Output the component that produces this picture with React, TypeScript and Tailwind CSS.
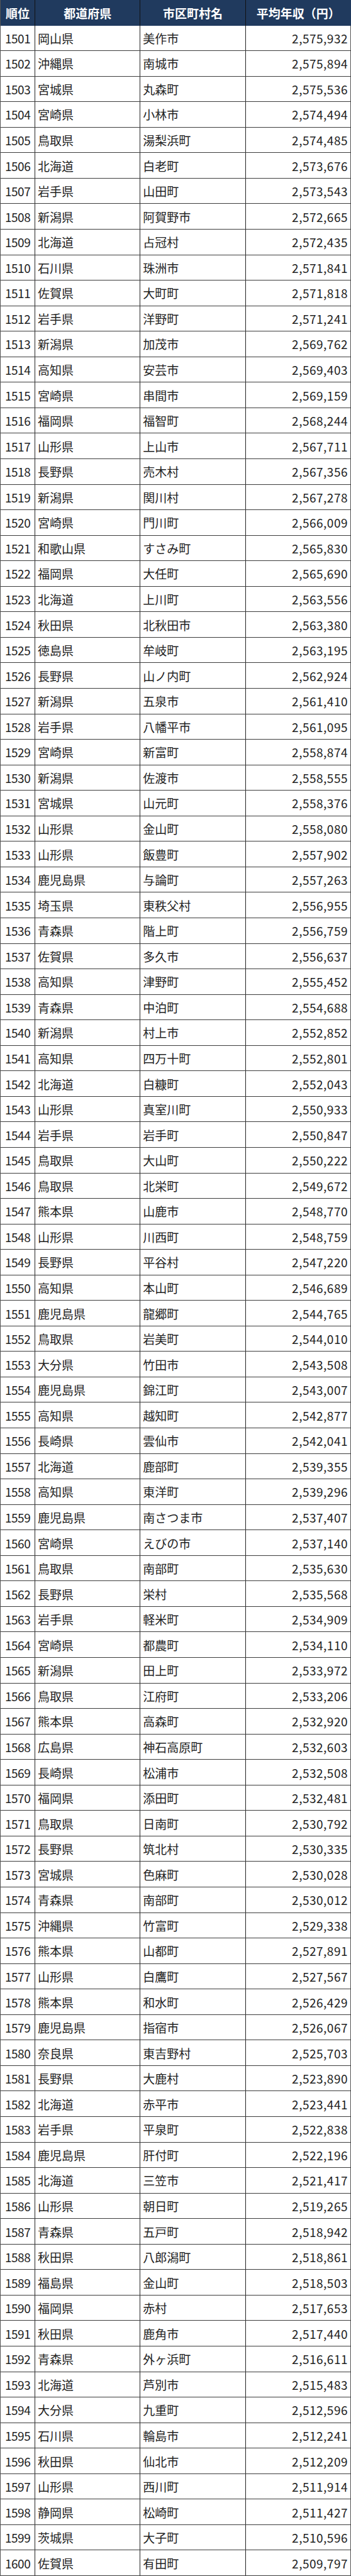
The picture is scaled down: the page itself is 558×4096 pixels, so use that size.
import React from "react";

const raw = `1501|岡山県|美作市|2,575,932
1502|沖縄県|南城市|2,575,894
1503|宮城県|丸森町|2,575,536
1504|宮崎県|小林市|2,574,494
1505|鳥取県|湯梨浜町|2,574,485
1506|北海道|白老町|2,573,676
1507|岩手県|山田町|2,573,543
1508|新潟県|阿賀野市|2,572,665
1509|北海道|占冠村|2,572,435
1510|石川県|珠洲市|2,571,841
1511|佐賀県|大町町|2,571,818
1512|岩手県|洋野町|2,571,241
1513|新潟県|加茂市|2,569,762
1514|高知県|安芸市|2,569,403
1515|宮崎県|串間市|2,569,159
1516|福岡県|福智町|2,568,244
1517|山形県|上山市|2,567,711
1518|長野県|売木村|2,567,356
1519|新潟県|関川村|2,567,278
1520|宮崎県|門川町|2,566,009
1521|和歌山県|すさみ町|2,565,830
1522|福岡県|大任町|2,565,690
1523|北海道|上川町|2,563,556
1524|秋田県|北秋田市|2,563,380
1525|徳島県|牟岐町|2,563,195
1526|長野県|山ノ内町|2,562,924
1527|新潟県|五泉市|2,561,410
1528|岩手県|八幡平市|2,561,095
1529|宮崎県|新富町|2,558,874
1530|新潟県|佐渡市|2,558,555
1531|宮城県|山元町|2,558,376
1532|山形県|金山町|2,558,080
1533|山形県|飯豊町|2,557,902
1534|鹿児島県|与論町|2,557,263
1535|埼玉県|東秩父村|2,556,955
1536|青森県|階上町|2,556,759
1537|佐賀県|多久市|2,556,637
1538|高知県|津野町|2,555,452
1539|青森県|中泊町|2,554,688
1540|新潟県|村上市|2,552,852
1541|高知県|四万十町|2,552,801
1542|北海道|白糠町|2,552,043
1543|山形県|真室川町|2,550,933
1544|岩手県|岩手町|2,550,847
1545|鳥取県|大山町|2,550,222
1546|鳥取県|北栄町|2,549,672
1547|熊本県|山鹿市|2,548,770
1548|山形県|川西町|2,548,759
1549|長野県|平谷村|2,547,220
1550|高知県|本山町|2,546,689
1551|鹿児島県|龍郷町|2,544,765
1552|鳥取県|岩美町|2,544,010
1553|大分県|竹田市|2,543,508
1554|鹿児島県|錦江町|2,543,007
1555|高知県|越知町|2,542,877
1556|長崎県|雲仙市|2,542,041
1557|北海道|鹿部町|2,539,355
1558|高知県|東洋町|2,539,296
1559|鹿児島県|南さつま市|2,537,407
1560|宮崎県|えびの市|2,537,140
1561|鳥取県|南部町|2,535,630
1562|長野県|栄村|2,535,568
1563|岩手県|軽米町|2,534,909
1564|宮崎県|都農町|2,534,110
1565|新潟県|田上町|2,533,972
1566|鳥取県|江府町|2,533,206
1567|熊本県|高森町|2,532,920
1568|広島県|神石高原町|2,532,603
1569|長崎県|松浦市|2,532,508
1570|福岡県|添田町|2,532,481
1571|鳥取県|日南町|2,530,792
1572|長野県|筑北村|2,530,335
1573|宮城県|色麻町|2,530,028
1574|青森県|南部町|2,530,012
1575|沖縄県|竹富町|2,529,338
1576|熊本県|山都町|2,527,891
1577|山形県|白鷹町|2,527,567
1578|熊本県|和水町|2,526,429
1579|鹿児島県|指宿市|2,526,067
1580|奈良県|東吉野村|2,525,703
1581|長野県|大鹿村|2,523,890
1582|北海道|赤平市|2,523,441
1583|岩手県|平泉町|2,522,838
1584|鹿児島県|肝付町|2,522,196
1585|北海道|三笠市|2,521,417
1586|山形県|朝日町|2,519,265
1587|青森県|五戸町|2,518,942
1588|秋田県|八郎潟町|2,518,861
1589|福島県|金山町|2,518,503
1590|福岡県|赤村|2,517,653
1591|秋田県|鹿角市|2,517,440
1592|青森県|外ヶ浜町|2,516,611
1593|北海道|芦別市|2,515,483
1594|大分県|九重町|2,512,596
1595|石川県|輪島市|2,512,241
1596|秋田県|仙北市|2,512,209
1597|山形県|西川町|2,511,914
1598|静岡県|松崎町|2,511,427
1599|茨城県|大子町|2,510,596
1600|佐賀県|有田町|2,509,797`;

const rows = raw.split("\n").map((l) => l.split("|"));

export default function App() {
  return (
    <div
      className="w-[558px] bg-white text-[#222222]"
      style={{ fontFamily: '"Noto Sans CJK JP", "Noto Sans", sans-serif' }}
    >
      <div className="grid h-[4096px] grid-rows-[repeat(101,minmax(0,1fr))] border-l border-[#555555]">
        <div className="grid grid-cols-[55px_1fr_1fr_1fr] bg-[#203a5e] text-[19px] font-bold leading-none text-white">
          <div className="flex items-center border-r border-[#111111] pl-[8px]">順位</div>
          <div className="flex items-center justify-center border-r border-[#111111]">都道府県</div>
          <div className="flex items-center justify-center border-r border-[#111111]">市区町村名</div>
          <div className="flex items-center justify-center">平均年収（円）</div>
        </div>
        {rows.map((r) => (
          <div
            key={r[0]}
            className="grid grid-cols-[55px_1fr_1fr_1fr] border-b border-[#3c3c3c] text-[19px] leading-none"
          >
            <div className="flex items-center border-r border-[#222222] pl-[7px] tracking-[-0.5px]">{r[0]}</div>
            <div className="flex items-center border-r border-[#222222] pl-[4px]">{r[1]}</div>
            <div className="flex items-center border-r border-[#222222] pl-[4px]">{r[2]}</div>
            <div className="flex items-center justify-end border-r border-[#555555] pr-[4px] tracking-[0.5px]">{r[3]}</div>
          </div>
        ))}
      </div>
    </div>
  );
}
